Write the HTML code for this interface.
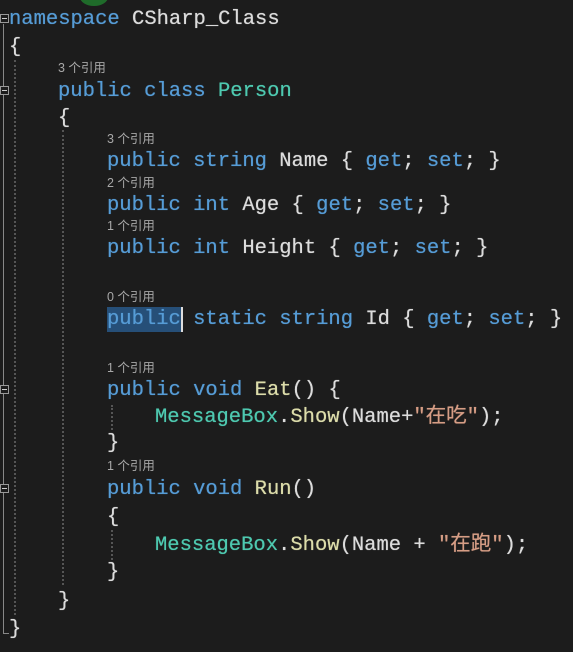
<!DOCTYPE html>
<html><head><meta charset="utf-8"><style>
html,body{margin:0;padding:0;}
body{width:573px;height:652px;background:#1c1c1c;position:relative;overflow:hidden;font-family:"Liberation Mono","Noto Sans CJK SC",monospace;}
.l{position:absolute;font-size:20.5px;line-height:24px;color:#dcdcdc;white-space:pre;margin-top:2px;text-shadow:0 0 0.6px currentColor;}
.c{position:absolute;font-size:12.5px;line-height:14px;color:#a8a8a8;white-space:pre;font-family:"Liberation Sans","Noto Sans CJK SC",sans-serif;}
.k{color:#569cd6}.t{color:#4ec9b0}.s{color:#d69d85}.m{color:#dcdcaa}
.g{position:absolute;width:0;border-left:2px dotted #555;}
.f{position:absolute;left:0;width:7px;height:7px;border:1px solid #999;background:#1c1c1c;}
.f:after{content:"";position:absolute;left:1px;top:3px;width:5px;height:1px;background:#ccc;}
</style></head><body>
<div style="position:absolute;left:3px;top:24px;width:1px;height:610px;background:#888"></div>
<div style="position:absolute;left:3px;top:633px;width:6px;height:1px;background:#888"></div>
<div style="position:absolute;left:80px;top:-12px;width:28px;height:18px;border-radius:50%;background:#1f6b2a"></div>
<div class="f" style="top:14px"></div>
<div class="f" style="top:86px"></div>
<div class="f" style="top:385px"></div>
<div class="f" style="top:484px"></div>
<div class="g" style="left:14px;top:60px;height:555px"></div>
<div class="g" style="left:62px;top:130px;height:455px"></div>
<div class="g" style="left:111px;top:405px;height:25px"></div>
<div class="g" style="left:111px;top:530px;height:30px"></div>

<div class="l" style="left:9px;top:6px"><span class="k">namespace</span> CSharp_Class</div>
<div class="l" style="left:9px;top:34px">{</div>
<div class="c" style="left:58px;top:61px">3 个引用</div>
<div class="l" style="left:58px;top:78px"><span class="k">public class</span> <span class="t">Person</span></div>
<div class="l" style="left:58px;top:105px">{</div>
<div class="c" style="left:107px;top:132px">3 个引用</div>
<div class="l" style="left:107px;top:148px"><span class="k">public string</span> Name { <span class="k">get</span>; <span class="k">set</span>; }</div>
<div class="c" style="left:107px;top:176px">2 个引用</div>
<div class="l" style="left:107px;top:192px"><span class="k">public int</span> Age { <span class="k">get</span>; <span class="k">set</span>; }</div>
<div class="c" style="left:107px;top:219px">1 个引用</div>
<div class="l" style="left:107px;top:235px"><span class="k">public int</span> Height { <span class="k">get</span>; <span class="k">set</span>; }</div>
<div class="c" style="left:107px;top:290px">0 个引用</div>
<div style="position:absolute;left:107px;top:307px;width:75px;height:25px;background:#264f78"></div>
<div style="position:absolute;left:181px;top:307px;width:2px;height:25px;background:#ddd"></div>
<div class="l" style="left:107px;top:306px"><span class="k">public static string</span> Id { <span class="k">get</span>; <span class="k">set</span>; }</div>
<div class="c" style="left:107px;top:361px">1 个引用</div>
<div class="l" style="left:107px;top:377px"><span class="k">public void</span> <span class="m">Eat</span>() {</div>
<div class="l" style="left:155px;top:404px"><span class="t">MessageBox</span>.<span class="m">Show</span>(Name+<span class="s">"在吃"</span>);</div>
<div class="l" style="left:107px;top:430px">}</div>
<div class="c" style="left:107px;top:459px">1 个引用</div>
<div class="l" style="left:107px;top:476px"><span class="k">public void</span> <span class="m">Run</span>()</div>
<div class="l" style="left:107px;top:504px">{</div>
<div class="l" style="left:155px;top:532px"><span class="t">MessageBox</span>.<span class="m">Show</span>(Name + <span class="s">"在跑"</span>);</div>
<div class="l" style="left:107px;top:559px">}</div>
<div class="l" style="left:58px;top:588px">}</div>
<div class="l" style="left:9px;top:616px">}</div>
</body></html>
